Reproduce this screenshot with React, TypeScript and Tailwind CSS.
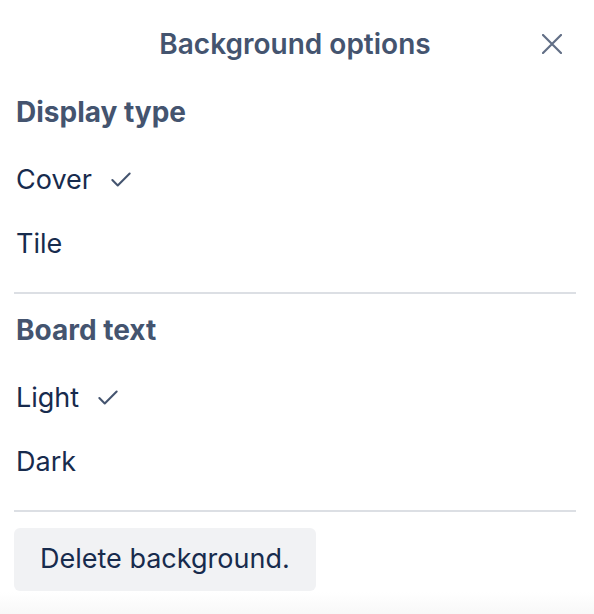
import { Check } from 'lucide-react'

interface OptionGroup {
  title: string
  options: { label: string; selected?: boolean }[]
}

const groups: OptionGroup[] = [
  {
    title: 'Display type',
    options: [{ label: 'Cover', selected: true }, { label: 'Tile' }],
  },
  {
    title: 'Board text',
    options: [{ label: 'Light', selected: true }, { label: 'Dark' }],
  },
]

function Group({ group }: { group: OptionGroup }) {
  return (
    <section>
      <h3 className="flex h-10 items-center pl-0.5 text-[28px] font-bold text-[#44546f]">
        {group.title}
      </h3>
      <ul className="mt-4">
        {group.options.map((opt) => (
          <li key={opt.label}>
            <button
              type="button"
              className="flex h-16 w-full items-center gap-[16px] pl-0.5 text-left text-[27px] text-[#172b4d]"
            >
              {opt.label}
              {opt.selected && (
                <Check className="h-[26px] w-[26px] text-[#44546f]" strokeWidth={1.9} />
              )}
            </button>
          </li>
        ))}
      </ul>
      <div className="mt-4 h-[2px] bg-[#dcdfe4]" />
    </section>
  )
}

export default function App() {
  return (
    <div
      className="relative h-[614px] w-[594px] overflow-hidden bg-white"
      style={{ fontFamily: 'Inter, "Noto Sans", sans-serif' }}
    >
      <div className="pl-[14px] pr-[18px]">
        <header className="relative flex h-[88px] items-center justify-center">
          <h2 className="text-[28px] font-semibold text-[#44546f]">Background options</h2>
          <button
            type="button"
            className="absolute right-[14px] top-[34px] text-[#626f86]"
            aria-label="Close"
          >
            <svg width="20" height="20" viewBox="0 0 20 20" fill="none">
              <path
                d="M1 1L19 19M19 1L1 19"
                stroke="currentColor"
                strokeWidth="2.2"
                strokeLinecap="round"
              />
            </svg>
          </button>
        </header>
        <div className="mt-1 flex flex-col gap-4">
          {groups.map((g) => (
            <Group key={g.title} group={g} />
          ))}
        </div>
        <button
          type="button"
          className="mt-4 h-[63px] rounded-md bg-[#f1f2f4] px-[26px] text-[27px] text-[#172b4d]"
        >
          Delete background.
        </button>
      </div>
      <div className="absolute inset-x-0 bottom-0 h-[22px] bg-gradient-to-b from-white to-[#f8f8f8]" />
    </div>
  )
}
